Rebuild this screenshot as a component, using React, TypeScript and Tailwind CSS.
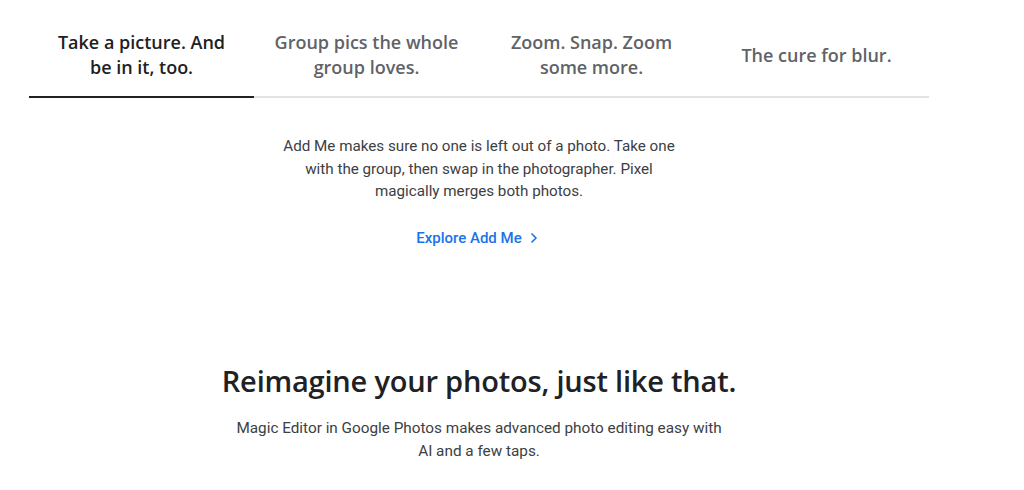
import { ChevronRight } from 'lucide-react'

const tabs = [
  { lines: ['Take a picture. And', 'be in it, too.'], active: true },
  { lines: ['Group pics the whole', 'group loves.'], active: false },
  { lines: ['Zoom. Snap. Zoom', 'some more.'], active: false },
  { lines: ['The cure for blur.'], active: false },
]

export default function App() {
  return (
    <div className="min-h-screen bg-white font-['Roboto',sans-serif]">
      <div className="w-[900px] ml-[29px] pt-[14px]">
        {/* Tabs */}
        <div className="grid grid-cols-4">
          {tabs.map((tab) => (
            <button
              key={tab.lines[0]}
              type="button"
              className={`h-[84px] flex flex-col items-center justify-center px-2 border-b-2 font-['Open_Sans',sans-serif] text-[18px] leading-[25px] font-semibold text-center ${
                tab.active ? 'border-[#202124] text-[#202124]' : 'border-[#e3e3e3] text-[#5f6368]'
              }`}
            >
              {tab.lines.map((line) => (
                <span key={line} className="whitespace-nowrap">
                  {line}
                </span>
              ))}
            </button>
          ))}
        </div>

        {/* Tab panel */}
        <div className="flex flex-col items-center pt-[37px]">
          <p className="w-[410px] text-center text-[15.2px] leading-[22.5px] text-[#3c4043]">
            Add Me makes sure no one is left out of a photo. Take one with the group, then swap in the
            photographer. Pixel magically merges both photos.
          </p>
          <a href="#" className="mt-[24px] flex items-center gap-[4px] text-[15px] font-medium text-[#1a73e8]">
            Explore Add Me
            <ChevronRight className="w-4 h-4" strokeWidth={2.5} />
          </a>
        </div>

        {/* Section */}
        <div className="flex flex-col items-center pt-[114px]">
          <h2 className="font-['Open_Sans',sans-serif] text-[29px] leading-[36px] font-semibold text-[#202124] tracking-[-0.2px]">
            Reimagine your photos, just like that.
          </h2>
          <p className="mt-[18px] w-[495px] text-center text-[15.3px] leading-[22.5px] text-[#3c4043]">
            Magic Editor in Google Photos makes advanced photo editing easy with AI and a few taps.
          </p>
        </div>
      </div>
    </div>
  )
}
